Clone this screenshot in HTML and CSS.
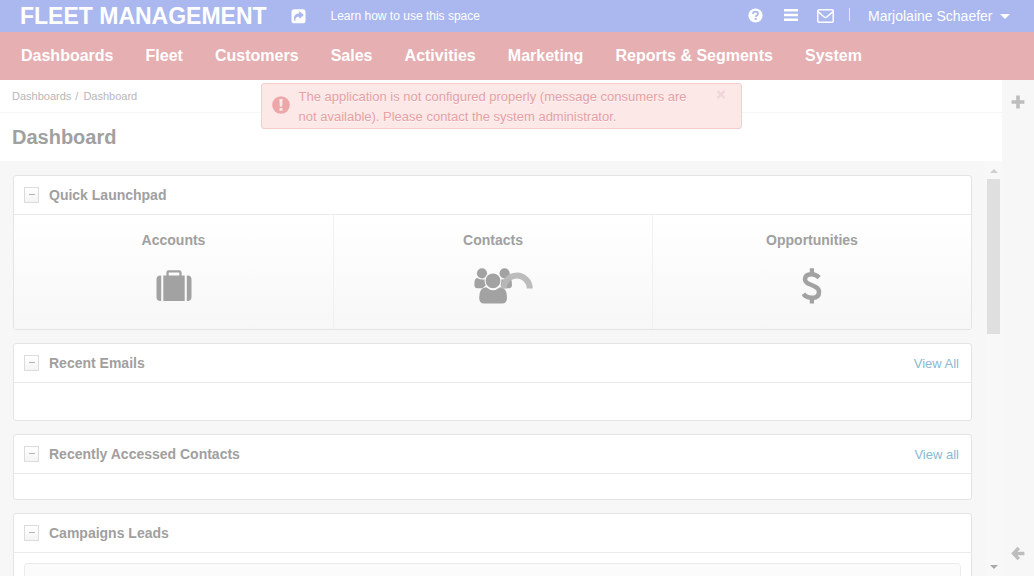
FILE: index.html
```html
<!DOCTYPE html>
<html lang="en">
<head>
<meta charset="utf-8">
<title>Dashboard</title>
<link rel="stylesheet" href="styles.css">
</head>
<body>
<header class="topbar">
  <span class="brand">FLEET MANAGEMENT</span>
  <svg class="share" width="15" height="15" viewBox="0 0 15 15"><rect x="0.5" y="0.3" width="14" height="14" rx="2.6" fill="#fff"/><path d="M3.6 11.9C1.9 7.3 4.3 4.6 8.3 4.6V2.1L12.8 6.1 8.3 10.1V7.7C5.7 7.6 3.8 8.7 4.6 11.9Z" fill="#aab8ef"/></svg>
  <span class="learn">Learn how to use this space</span>
  <div class="tools">
    <svg class="help" width="15" height="15" viewBox="0 0 15 15"><circle cx="7.5" cy="7.5" r="7.1" fill="#fff"/><path d="M5 5.9C5.1 4.3 6.2 3.6 7.5 3.6c1.4 0 2.5.8 2.5 2.1 0 1.7-2.2 1.7-2.3 3.2" fill="none" stroke="#aab8ef" stroke-width="1.9"/><rect x="6.7" y="10" width="2" height="1.9" fill="#aab8ef"/></svg>
    <svg class="bars" width="14" height="12" viewBox="0 0 14 12"><path d="M0 0h14v2.6H0zM0 4.7h14v2.6H0zM0 9.4h14V12H0z" fill="#fff"/></svg>
    <svg class="mail" width="17" height="14" viewBox="0 0 17 14"><rect x="0.75" y="0.75" width="15.5" height="12.5" rx="1.3" fill="none" stroke="#fff" stroke-width="1.5"/><path d="M1 2.6 7.2 8q1.3 1 2.6 0L16 2.6" fill="none" stroke="#fff" stroke-width="1.4"/></svg>
    <span class="divider"></span>
    <span class="user">Marjolaine Schaefer</span>
    <span class="caret"></span>
  </div>
</header>
<nav class="mainnav"><a>Dashboards</a><a>Fleet</a><a>Customers</a><a>Sales</a><a>Activities</a><a>Marketing</a><a>Reports &amp; Segments</a><a>System</a></nav>
<div class="body">
  <main class="main">
    <div class="crumbs">Dashboards<span class="slash">/</span>Dashboard</div>
    <h1 class="title">Dashboard</h1>
    <div class="scrollarea">
      <div class="widgets">
        <section class="widget launchpad">
          <div class="whead"><span class="toggle"></span><h2>Quick Launchpad</h2></div>
          <div class="tiles">
            <div class="tile"><span>Accounts</span>
              <svg width="36" height="32" viewBox="0 0 36 32" fill="#a2a2a2"><path d="M5.2 5.4V31H4.5Q.5 31 .5 27V9.4q0-4 4-4ZM30.8 5.4V31h.7q4 0 4-4V9.4q0-4-4-4ZM7.3 31V5.4h3.1V2.5Q10.4.3 12.6.3H23.4q2.2 0 2.2 2.2v2.9h3.1V31ZM12.7 5.4H23.3V2.6H12.7Z"/></svg></div>
            <div class="tile"><span>Contacts</span>
              <svg width="38" height="36" viewBox="0 0 38 36" fill="#a2a2a2"><circle cx="8" cy="5.3" r="5.1"/><circle cx="30.6" cy="5.3" r="5.1"/><path d="M3 9.9Q.4 10 .4 16.2v1.5Q.5 20 3 20.2H8.5L12 17V11Q8 12.5 3 9.9ZM35.3 9.9q2.6.1 2.6 6.3v1.5q-.1 2.3-2.6 2.5H29.7L26.3 17V11q4 1.5 9-1.1Z"/><circle cx="19" cy="12.8" r="8.5" fill="#fbfbfb"/><path d="M12.2 19.2Q5.2 19.2 5.2 29.7 5.2 35.5 10 35.5H28.3Q33 35.5 33 29.7 33 19.2 26 19.2 22 22.3 19 22.3 16 22.3 12.2 19.2Z"/><circle cx="19" cy="12.8" r="7.4"/></svg></div>
            <div class="tile"><span>Opportunities</span>
              <svg width="20" height="36" viewBox="0 0 20 36"><path d="M17.2 9.6Q13.8 6.3 9.7 6.3 3 6.3 3 11.4C3 17.8 17 16.2 17 23.9 17 28 14 29.8 9.8 29.8 5.5 29.8 3 28 1.3 26" fill="none" stroke="#a2a2a2" stroke-width="4.5"/><path d="M7.8 .3h4.2V6H7.8zM7.8 30h4.2v5.5H7.8z" fill="#a2a2a2"/></svg></div>
          </div>
        </section>
        <section class="widget emails">
          <div class="whead"><span class="toggle"></span><h2>Recent Emails</h2><a class="view">View All</a></div>
        </section>
        <section class="widget contacts">
          <div class="whead"><span class="toggle"></span><h2>Recently Accessed Contacts</h2><a class="view">View all</a></div>
        </section>
        <section class="widget leads">
          <div class="whead"><span class="toggle"></span><h2>Campaigns Leads</h2></div>
          <div class="chart"></div>
        </section>
      </div>
      <div class="scrollbar"><span class="up"></span><span class="thumb"></span><span class="down"></span></div>
    </div>
  </main>
  <aside class="side">
    <svg width="14" height="14" viewBox="0 0 14 14"><path d="M5.2.6h3.6v4.6h4.6v3.6H8.8v4.6H5.2V8.8H.6V5.2h4.6z" fill="#bdbdbd"/></svg>
    <svg width="14" height="15" viewBox="0 0 14 15"><path d="M7.8 2 2.5 7.5l5.3 5.5M2.8 7.5H13.4" fill="none" stroke="#bdbdbd" stroke-width="3.3"/></svg>
  </aside>
</div>
<div class="alert">
  <svg class="warn" width="18" height="18" viewBox="0 0 18 18"><circle cx="9" cy="9" r="8.8" fill="#eda7a9"/><path d="M7.4 3h3.2l-.4 7.4H7.8zM7.5 11.9h3v2.8h-3z" fill="#fde8e8"/></svg>
  <p>The application is not configured properly (message consumers are<br>not available). Please contact the system administrator.</p>
  <svg class="close" width="10" height="9" viewBox="0 0 10 9"><path d="M1.5 1 8.5 8M8.5 1 1.5 8" stroke="#f2d7da" stroke-width="2.5"/></svg>
</div>
<svg class="spinner" width="34" height="18" viewBox="0 0 34 18"><path d="M3.8 17.5a13 13 0 0 1 26 0" fill="none" stroke="#b9b9b9" stroke-width="6"/></svg>
</body>
</html>
```
FILE: styles.css
```css
* { box-sizing: border-box; }
body { margin: 0; height: 576px; overflow: hidden; background: #f7f7f7; font-family: "Liberation Sans", Arial, sans-serif; color: #a0a0a0; display: flex; flex-direction: column; }
svg { display: block; flex: none; }
.topbar { height: 32px; flex: none; background: #aab8ef; color: #fff; display: flex; align-items: center; padding-left: 20px; white-space: nowrap; }
.brand { font-size: 23px; font-weight: bold; width: 247px; line-height: 32px; }
.share { margin-left: 24px; }
.learn { font-size: 12px; margin-left: 24.5px; }
.tools { margin-left: auto; display: flex; align-items: center; padding-right: 24px; }
.help { margin-top: -1px; }
.bars { margin: -2px 0 0 21px; }
.mail { margin-left: 19px; }
.divider { width: 1px; height: 13px; background: #e6eafb; margin: 0 18px 3px 15px; }
.user { font-size: 14px; width: 125px; }
.caret { border: 5px solid transparent; border-top-color: #fff; border-bottom: 0; margin-left: 7px; }
.mainnav { height: 48px; flex: none; background: #e6afb2; color: #fff; display: flex; align-items: center; gap: 32.1px; padding-left: 21px; font-size: 16px; font-weight: bold; white-space: nowrap; }
.body { display: flex; flex: 1; min-height: 0; }
.main { width: 1002px; display: flex; flex-direction: column; min-height: 0; }
.crumbs { height: 33px; flex: none; background: #fff; border-bottom: 1px solid #f7f7f7; padding-left: 12px; font-size: 11px; line-height: 33px; color: #b7b7b7; }
.slash { margin: 0 5px 0 4px; }
.title { margin: 0; height: 48px; flex: none; background: #fff; padding-left: 12px; font-size: 20px; line-height: 48px; }
.scrollarea { flex: 1; min-height: 0; display: flex; justify-content: space-between; overflow: hidden; }
.widgets { width: 959px; margin: 14px 0 0 13px; display: flex; flex-direction: column; gap: 13px; }
.widget { flex: none; background: #fff; border: 1px solid #e4e4e4; border-radius: 3px; overflow: hidden; }
.launchpad { height: 155px; }
.emails { height: 78px; }
.contacts { height: 66px; }
.leads { height: 200px; }
.whead { height: 39px; border-bottom: 1px solid #ebebeb; display: flex; align-items: center; padding: 0 12px 0 10px; }
.toggle { width: 15px; height: 16px; border: 1px solid #dcdcdc; background: linear-gradient(#fff, #f4f4f4); display: flex; align-items: center; justify-content: center; padding-bottom: 1px; }
.toggle::after { content: ""; width: 6px; height: 1px; background: #b5b5b5; }
h2 { margin: 0 auto 0 10px; font-size: 14px; white-space: nowrap; }
.view { font-size: 13px; color: #8ab9d2; }
.tiles { height: 114px; display: grid; grid-template-columns: repeat(3, 1fr); background: linear-gradient(#fff, #f7f7f7); }
.tile { display: flex; flex-direction: column; align-items: center; padding-top: 17px; font-size: 14px; font-weight: bold; }
.tile + .tile { border-left: 1px solid #f1f1f1; }
.tile span { line-height: 16px; }
.tile svg { margin-top: 20px; }
.tile:first-child svg { margin-top: 22px; }
.chart { margin: 10px 10px 0; height: 140px; background: #fbfbfb; border: 1px solid #ebebeb; border-radius: 4px; }
.scrollbar { width: 17px; background: #f8f8f8; display: flex; flex-direction: column; align-items: center; padding: 8px 2px 7px 2px; }
.up { border: 4px solid transparent; border-bottom-color: #d0d0d0; border-top: 0; }
.thumb { width: 13px; height: 155px; background: #dfdfdf; margin-top: 6px; }
.down { border: 4px solid transparent; border-top-color: #a9a9a9; border-bottom: 0; margin-top: auto; }
.side { flex: 1; background: #f7f7f7; display: flex; flex-direction: column; align-items: center; justify-content: space-between; padding: 15px 0 15px; }
.alert { position: absolute; left: 261px; top: 83px; width: 481px; height: 46px; display: flex; align-items: center; padding: 0 15px 3px 10px; background: #fde8e8; border: 1px solid #f6cccd; border-radius: 3px; }
.alert p { margin: 5px 0 0 8.5px; font-size: 13px; line-height: 20px; color: #e5a0a3; white-space: nowrap; text-shadow: 0 1px 0 #fff5f5; }
.close { margin: 0 0 20px auto; }
.spinner { position: absolute; left: 500px; top: 271px; opacity: .95; }
```
